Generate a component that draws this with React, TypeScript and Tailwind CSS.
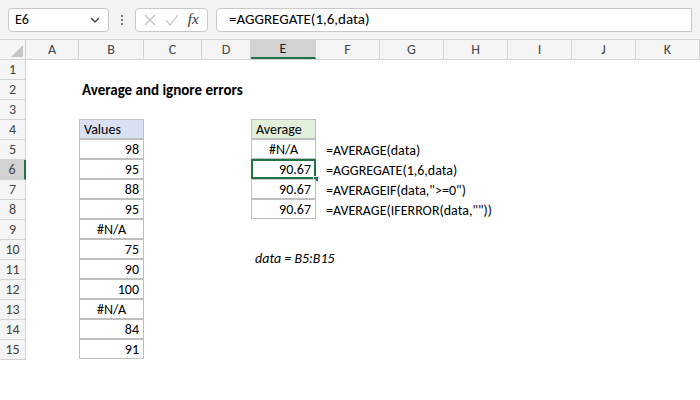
const cols = [
  { l: 'A', w: 53 }, { l: 'B', w: 65 }, { l: 'C', w: 58 }, { l: 'D', w: 49 }, { l: 'E', w: 65 },
  { l: 'F', w: 64 }, { l: 'G', w: 64 }, { l: 'H', w: 64 }, { l: 'I', w: 64 }, { l: 'J', w: 64 }, { l: 'K', w: 64 },
];

const values: (string | null)[] = [null, null, null, 'Values', '98', '95', '88', '95', '#N/A', '75', '90', '100', '#N/A', '84', '91'];
const avg: (string | null)[] = [null, null, null, 'Average', '#N/A', '90.67', '90.67', '90.67'];
const formulas: Record<number, string> = {
  5: '=AVERAGE(data)',
  6: '=AGGREGATE(1,6,data)',
  7: '=AVERAGEIF(data,">=0")',
  8: '=AVERAGE(IFERROR(data,""))',
};

function Cell({ v, hdr, fill, selected }: { v: string; hdr: boolean; fill: string; selected?: boolean }) {
  const align = hdr ? 'justify-start pl-1' : v === '#N/A' ? 'justify-center' : 'justify-end pr-1';
  return (
    <div className={`relative h-full flex items-center ${align} border border-[#bfbfbf] ${hdr ? fill : 'bg-white'} -mt-px`}>
      {v}
      {selected && (
        <>
          <div className="absolute -inset-px border-2 border-[#217346]" />
          <div className="absolute -right-[4px] -bottom-[4px] w-[6px] h-[6px] bg-[#217346] border border-white" />
        </>
      )}
    </div>
  );
}

export default function App() {
  return (
    <div className="w-[700px] h-[400px] overflow-hidden bg-white text-[14px] text-black" style={{ fontFamily: 'Carlito, "Open Sans", "Liberation Sans", sans-serif' }}>
      {/* Formula bar */}
      <div className="h-[40px] bg-[#f3f3f3] flex items-center px-2 gap-2 border-b border-[#d4d4d4]">
        <div className="w-[101px] h-[24px] bg-white border border-[#c8c8c8] rounded flex items-center justify-between pl-[6px] pr-2">
          <span>E6</span>
          <svg width="10" height="6" viewBox="0 0 10 6"><path d="M1 1l4 4 4-4" stroke="#444" strokeWidth="1.3" fill="none" /></svg>
        </div>
        <div className="flex flex-col gap-[2px] px-1">
          <span className="w-[2px] h-[2px] bg-[#777]" /><span className="w-[2px] h-[2px] bg-[#777]" /><span className="w-[2px] h-[2px] bg-[#777]" />
        </div>
        <div className="w-[73px] h-[24px] bg-white border border-[#c8c8c8] rounded flex items-center justify-around px-1">
          <svg width="12" height="12" viewBox="0 0 12 12"><path d="M1 1l10 10M11 1L1 11" stroke="#c0c0c0" strokeWidth="1.2" /></svg>
          <svg width="14" height="12" viewBox="0 0 14 12"><path d="M1 6l4 5 8-10" stroke="#c0c0c0" strokeWidth="1.2" fill="none" /></svg>
          <span className="italic text-[15px] text-[#333]" style={{ fontFamily: '"Liberation Serif", serif' }}>fx</span>
        </div>
        <div className="flex-1 h-[24px] bg-white border border-[#c8c8c8] rounded-l flex items-center pl-3 text-[15px]">=AGGREGATE(1,6,data)</div>
      </div>
      {/* Column headers */}
      <div className="flex h-[20px] bg-[#f5f5f5] text-[#444] border-b border-[#d4d4d4]">
        <div className="w-[26px] border-r border-[#d4d4d4] relative">
          <svg className="absolute right-[2px] bottom-[2px]" width="12" height="12" viewBox="0 0 12 12"><path d="M12 0L12 12L0 12Z" fill="#c6c6c6" /></svg>
        </div>
        {cols.map((c) => (
          <div key={c.l} style={{ width: c.w }} className={`shrink-0 flex items-center justify-center border-r border-[#d4d4d4] ${c.l === 'E' ? 'bg-[#d2d2d2] border-b-2 border-b-[#217346] text-[#1a1a1a]' : ''}`}>{c.l}</div>
        ))}
      </div>
      {/* Rows */}
      <div className="relative">
        {Array.from({ length: 15 }).map((_, i) => {
          const r = i + 1;
          const b = values[i];
          const e = avg[i];
          return (
            <div key={r} className="flex h-[20px]">
              <div className={`w-[26px] shrink-0 flex items-center justify-center border-r border-b border-[#d4d4d4] text-[#444] ${r === 6 ? 'bg-[#d2d2d2] border-r-2 border-r-[#217346] text-[#1a1a1a]' : 'bg-[#f5f5f5]'}`}>{r}</div>
              <div className="w-[53px] shrink-0" />
              <div className="w-[65px] shrink-0 relative">
                {b && <Cell v={b} hdr={r === 4} fill="bg-[#d9e1f2]" />}
                {r === 2 && <span className="absolute left-[3px] top-0 h-[20px] flex items-center font-bold whitespace-nowrap text-[15px]">Average and ignore errors</span>}
              </div>
              <div className="w-[58px] shrink-0" />
              <div className="w-[49px] shrink-0" />
              <div className="w-[65px] shrink-0">{e && <Cell v={e} hdr={r === 4} fill="bg-[#e2efda]" selected={r === 6} />}</div>
              <div className="flex-1 flex items-center pl-[10px] whitespace-nowrap">{formulas[r]}</div>
            </div>
          );
        })}
        <span className="absolute left-[255px] top-[188px] italic">data = B5:B15</span>
      </div>
    </div>
  );
}
